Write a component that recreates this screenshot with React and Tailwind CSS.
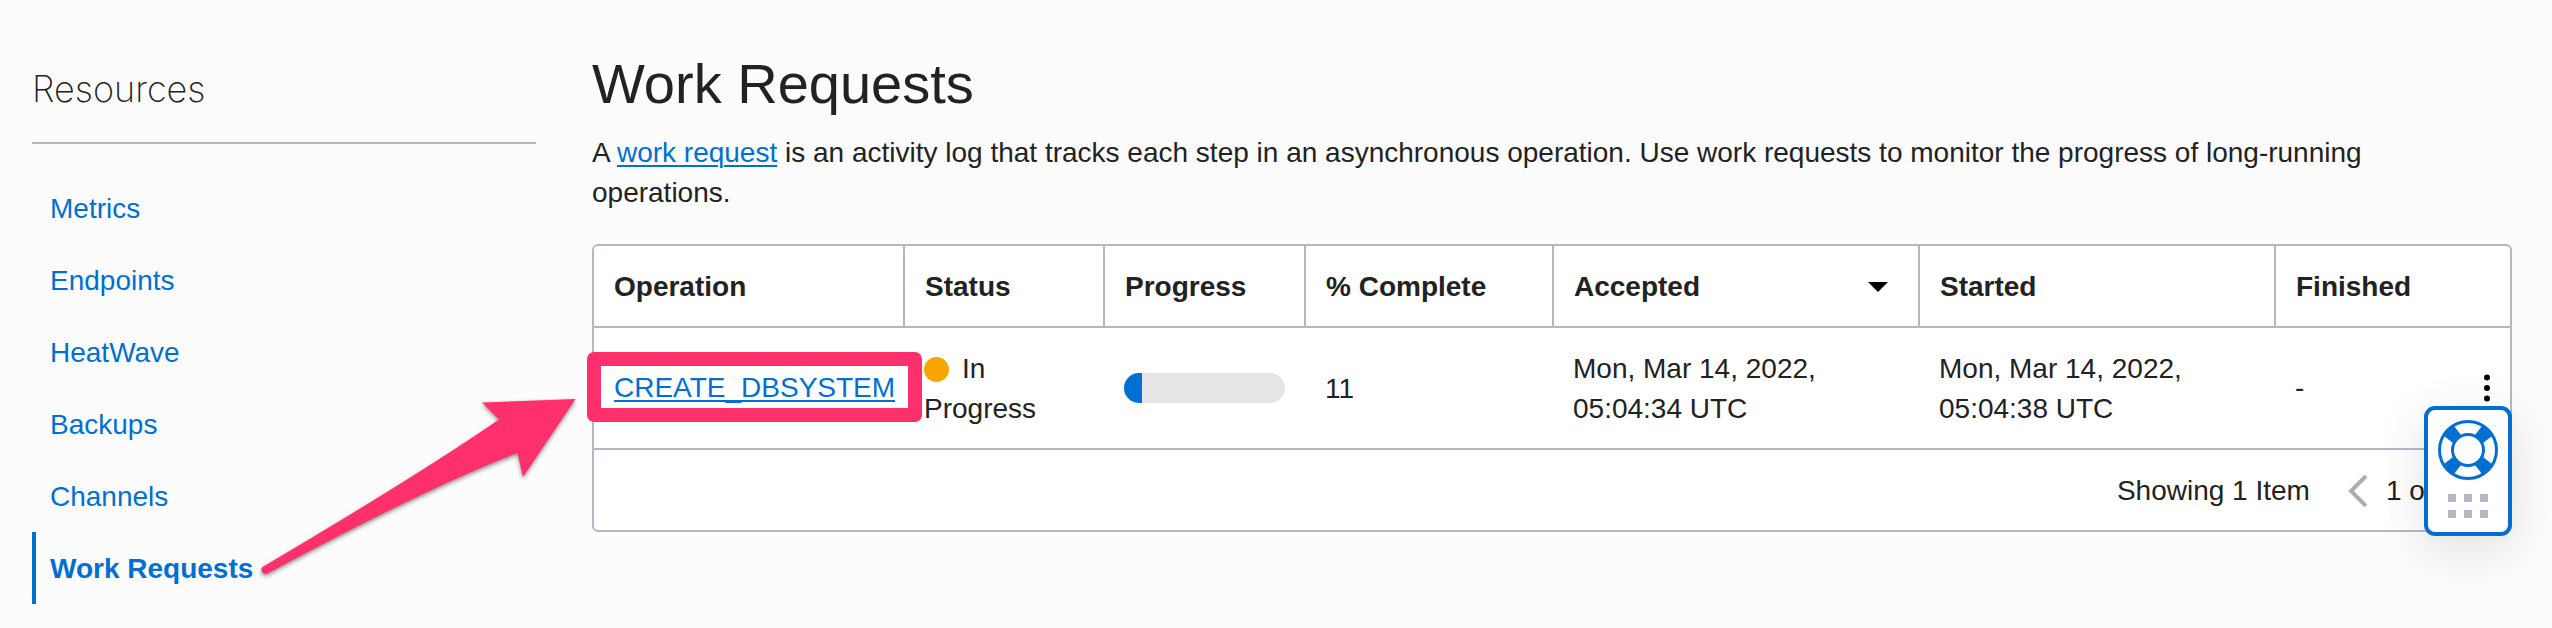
const links = ["Metrics", "Endpoints", "HeatWave", "Backups", "Channels", "Work Requests"];

const columns = [
  { label: "Operation", width: "w-[310px]" },
  { label: "Status", width: "w-[200px]" },
  { label: "Progress", width: "w-[201px]" },
  { label: "% Complete", width: "w-[248px]" },
  { label: "Accepted", width: "w-[366px]", sorted: true },
  { label: "Started", width: "w-[356px]" },
  { label: "Finished", width: "" },
];

function Sidebar() {
  return (
    <aside className="w-[504px] shrink-0 pt-[64px]">
      <h2 className="border-b-2 border-[#b3b9c4] pb-[28px] font-[Inter] text-[36px] leading-[50px] font-extralight">
        Resources
      </h2>
      <nav className="mt-[28px] flex flex-col">
        {links.map((label) => (
          <a
            key={label}
            href="#"
            className={
              label === "Work Requests"
                ? "border-l-4 border-[#006fd1] pt-[17px] pb-[15px] pl-[14px] font-bold text-[#006fd1]"
                : "border-l-4 border-transparent pt-[17px] pb-[15px] pl-[14px] text-[#006fd1]"
            }
          >
            {label}
          </a>
        ))}
      </nav>
    </aside>
  );
}

function Arrow() {
  return (
    <svg
      className="pointer-events-none absolute top-[390px] left-[250px] h-[200px] w-[340px] drop-shadow-[0_2px_2px_rgba(0,0,0,0.45)]"
      viewBox="250 390 340 200"
      aria-hidden="true"
    >
      <path
        d="M262.500 567 Q420 474 499 419.500 L482 402.500 L575.500 399 L523 477 L517.500 453 Q430 486 267.500 573.500 A4.200 4.200 0 0 1 262.500 567 Z"
        fill="#ff306c"
      />
    </svg>
  );
}

function HelpWidget() {
  return (
    <button
      type="button"
      aria-label="Help"
      className="absolute right-[-2px] bottom-[-6px] flex h-[130px] w-[88px] flex-col items-center rounded-[11px] border-4 border-[#006fd1] bg-white pt-[10px] shadow-[0_12px_48px_rgba(0,0,0,0.12)]"
    >
      <svg className="size-[60px]" viewBox="-30 -30 60 60" aria-hidden="true">
        <g fill="#006fd1">
          {[0, 90, 180, 270].map((angle) => (
            <path
              key={angle}
              d="M-24 -14L-20 -20L-14 -24L-7 -15L-15 -7Z"
              transform={`rotate(${angle})`}
            />
          ))}
        </g>
        <circle r="28.5" fill="none" stroke="#006fd1" strokeWidth="3" />
        <circle r="15.5" fill="#fff" stroke="#006fd1" strokeWidth="3" />
      </svg>
      <span className="mt-[14px] grid grid-cols-3 gap-[8px]">
        {[0, 1, 2, 3, 4, 5].map((n) => (
          <span key={n} className="size-[8px] bg-[#b3b9c4]" />
        ))}
      </span>
    </button>
  );
}

function RequestsTable() {
  return (
    <div className="relative mt-[31px] rounded-[6px] border-2 border-[#b3b9c4] bg-white">
      <table className="w-full table-fixed border-collapse text-left">
        <thead>
          <tr className="border-b-2 border-[#b3b9c4]">
            {columns.map((column) => (
              <th
                key={column.label}
                className={`${column.width} border-r-2 border-[#b3b9c4] px-[20px] pt-[21px] pb-[19px] font-bold last:border-r-0`}
              >
                {column.sorted ? (
                  <span className="flex items-center justify-between pr-[10px]">
                    {column.label}
                    <svg className="h-[10px] w-[20px]" viewBox="0 0 20 10" aria-hidden="true">
                      <path d="M0 0H20L10 10Z" />
                    </svg>
                  </span>
                ) : (
                  column.label
                )}
              </th>
            ))}
          </tr>
        </thead>
        <tbody>
          <tr className="border-b-2 border-[#b3b9c4]">
            <td className="relative px-[20px] py-[20px]">
              <a href="#" className="text-[#006fd1] underline decoration-2 underline-offset-[3px]">
                CREATE_DBSYSTEM
              </a>
              <span className="pointer-events-none absolute top-[24px] left-[-7px] h-[70px] w-[335px] rounded-[7px] border-[14px] border-[#ff306c]" />
            </td>
            <td className="px-[20px] pt-[21px] pb-[19px]">
              <span className="mr-[13px] inline-block size-[25px] rounded-full bg-[#f7a600] align-[-4px]" />
              In Progress
            </td>
            <td className="px-[20px] py-[20px]">
              <div
                role="progressbar"
                aria-label="Progress"
                aria-valuenow={11}
                aria-valuemin={0}
                aria-valuemax={100}
                className="h-[30px] overflow-hidden rounded-full bg-[#e5e5e5]"
              >
                <div className="h-full bg-[#006fd1]" style={{ width: "11%" }} />
              </div>
            </td>
            <td className="px-[20px] pt-[21px] pb-[19px]">11</td>
            <td className="pt-[21px] pr-[80px] pb-[19px] pl-[20px]">Mon, Mar 14, 2022, 05:04:34 UTC</td>
            <td className="pt-[21px] pr-[80px] pb-[19px] pl-[20px]">Mon, Mar 14, 2022, 05:04:38 UTC</td>
            <td className="px-[20px] py-[20px]">
              <div className="flex items-center justify-between">
                -
                <button type="button" aria-label="Actions">
                  <svg className="h-[28px] w-[6px]" viewBox="0 0 6 28" aria-hidden="true">
                    <circle cx="3" cy="3.500" r="3" />
                    <circle cx="3" cy="14" r="3" />
                    <circle cx="3" cy="24.500" r="3" />
                  </svg>
                </button>
              </div>
            </td>
          </tr>
        </tbody>
      </table>
      <div className="flex items-center justify-end pt-[21px] pr-[54px] pb-[19px]">
        <span>Showing 1 Item</span>
        <button type="button" aria-label="Previous page" className="mr-[18px] ml-[38px]">
          <svg
            className="h-[32px] w-[20px]"
            viewBox="0 0 20 32"
            fill="none"
            stroke="#adadad"
            strokeWidth="4"
            aria-hidden="true"
          >
            <path d="M18 1L3 16L18 31" />
          </svg>
        </button>
        <span>1 of 1</span>
      </div>
      <HelpWidget />
    </div>
  );
}

export default function App() {
  return (
    <div className="relative flex min-h-screen gap-[56px] bg-[#fcfcfc] pr-[40px] pl-[32px] font-['Liberation_Sans',sans-serif] text-[28px] leading-[40px] text-[#222]">
      <Sidebar />
      <main className="min-w-0 flex-1 pt-[48px]">
        <h1 className="text-[56px] leading-[72px]">Work Requests</h1>
        <p className="mt-[13px] pr-[80px]">
          A{" "}
          <a href="#" className="text-[#006fd1] underline decoration-2 underline-offset-[3px]">
            work request
          </a>{" "}
          is an activity log that tracks each step in an asynchronous operation. Use work requests to
          monitor the progress of long-running operations.
        </p>
        <RequestsTable />
      </main>
      <Arrow />
    </div>
  );
}
